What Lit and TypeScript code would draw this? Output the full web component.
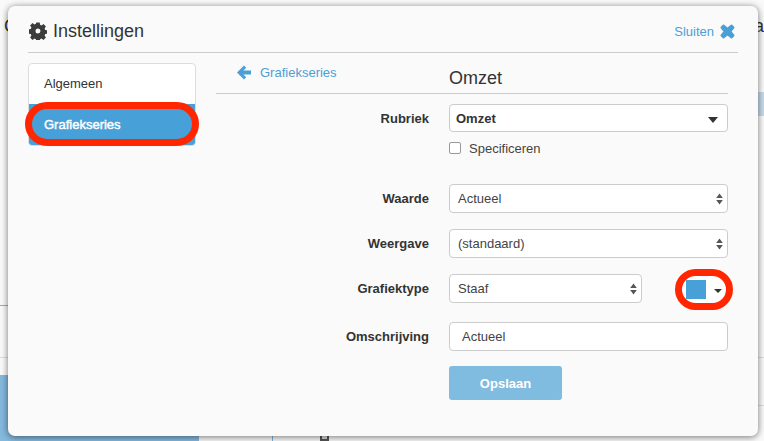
import { LitElement, html, css } from "lit";
import { customElement } from "lit/decorators.js";

const updown = html`<svg class="updown" width="7" height="12" viewBox="0 0 7 12"><path d="M3.5 .5 6.800 5H.2zM3.500 11.500 .2 7h6.600z" fill="#555"/></svg>`;

@customElement("app-root")
export class AppRoot extends LitElement {
  static styles = css`
    :host { display: block; width: 764px; height: 441px; position: relative; overflow: hidden; background: #fafafa; font-family: "Liberation Sans", Arial, sans-serif; color: #333; font-size: 13px; }
    .bg { position: absolute; }
    .bgtext { position: absolute; font-size: 18px; line-height: 20px; color: #333; }
    .l-blue { background: #7fb5dc; }
    .l-grey { background: #ddd; }
    .fill { background: #85b9de; }
    .band { background: #c5dbea; }
    .tiny { box-sizing: border-box; border: 2px solid #555; background: #ddd; }
    .modal { position: absolute; left: 8px; top: 6px; width: 750px; height: 430px; box-sizing: border-box; background: #fafafa; border-radius: 7px; box-shadow: 0 1px 7px rgba(0,0,0,.55); padding: 0 20px; }
    .head { height: 47px; box-sizing: border-box; border-bottom: 1px solid #ccc; display: flex; align-items: center; justify-content: space-between; padding: 4px 3px 0 1px; }
    .title { display: flex; align-items: center; gap: 6px; font-size: 18px; color: #333; }
    .close { display: flex; align-items: center; gap: 6px; color: #4a9fd6; font-size: 13px; }
    .body { display: flex; padding-top: 10px; }
    .side { width: 168px; height: 83px; flex: none; box-sizing: border-box; border: 1px solid #ddd; border-radius: 4px; background: #fff; position: relative; overflow: hidden; }
    .side .item { height: 38px; padding-left: 15px; display: flex; align-items: center; box-sizing: border-box; }
    .side .active { height: 42px; padding-bottom: 2px; background: #48a0d8; color: #fff; -webkit-text-stroke: .45px #fff; position: absolute; left: -1px; right: -1px; bottom: -1px; padding-left: 16px; }
    .main { margin-left: 20px; width: 512px; }
    .crumb { height: 31px; display: flex; box-sizing: border-box; border-bottom: 1px solid #ccc; }
    .back { width: 233px; display: flex; gap: 9px; color: #4a9fd6; font-size: 13px; padding-left: 21px; box-sizing: border-box; height: 19px; align-items: center; }
    .sub { font-size: 18px; line-height: 21px; padding-top: 5px; color: #333; }
    .form { display: grid; grid-template-columns: 213px 279px; column-gap: 20px; padding-top: 10px; }
    .lab { font-weight: 700; text-align: right; color: #333; font-size: 13px; align-self: center; }
    .ctl { box-sizing: border-box; height: 29px; border: 1px solid #ccc; border-radius: 4px; background: #fff; display: flex; align-items: center; justify-content: space-between; padding: 0 4px 0 8px; font-size: 13px; color: #444; }
    .ctl.strong { height: 28px; font-weight: 700; color: #333; padding: 0 9px 0 6px; }
    .ctl.input { padding-left: 12px; }
    .caret { width: 0; height: 0; margin-top: 3px; border-left: 5px solid transparent; border-right: 5px solid transparent; border-top: 6px solid #333; }
    .check { display: flex; align-items: center; gap: 8px; padding-top: 6px; height: 26px; box-sizing: border-box; grid-column: 2; color: #444; }
    .box { width: 10px; height: 10px; border: 1px solid #999; border-radius: 2px; background: #fff; }
    .row2 { display: flex; justify-content: space-between; align-items: flex-start; }
    .ctl.short { width: 193px; }
    .picker { position: relative; width: 42px; display: flex; align-items: center; gap: 8px; margin-top: 6px; }
    .swatch { position: relative; width: 20px; height: 19px; background: #48a0d8; }
    .ring { position: absolute; left: -11px; top: -11px; width: 58px; height: 41px; box-sizing: border-box; border: 7px solid #ff2600; border-radius: 21px; background: #fff; }
    .ring2 { position: absolute; left: 17px; top: 96px; width: 174px; height: 44px; box-sizing: border-box; border: 7px solid #ff2600; border-radius: 22px; }
    .mini { position: relative; width: 0; height: 0; margin-top: 2px; border-left: 4px solid transparent; border-right: 4px solid transparent; border-top: 4px solid #333; }
    .btn { width: 113px; height: 34px; border-radius: 3px; background: #7fbce0; color: #fff; font-weight: 700; display: flex; align-items: center; justify-content: center; font-size: 13px; }
    .wide { grid-column: 1 / 3; }
    .s26 { height: 26px; }
    .s16 { height: 16px; }
    .s19 { height: 19px; }
    .s15 { height: 15px; }
    .p1 { left: 0; top: 305px; width: 8px; height: 1px; }
    .p2 { left: 0; top: 357px; width: 8px; height: 1px; }
    .p3 { left: 0; top: 375px; width: 199px; height: 66px; }
    .p4 { left: 272px; top: 430px; width: 1px; height: 11px; }
    .p5 { left: 758px; top: 92px; width: 6px; height: 24px; }
    .p6 { left: 758px; top: 357px; width: 6px; height: 1px; }
    .p7 { left: 758px; top: 405px; width: 6px; height: 1px; }
    .p8 { left: 320px; top: 434px; width: 9px; height: 7px; }
    .c { left: 4px; top: 16px; }
    .a { left: 754px; top: 16px; }
  `;
  render() {
    return html`
      <div class="bg l-blue p1"></div>
      <div class="bg l-grey p2"></div>
      <div class="bg fill p3"></div>
      <div class="bg l-blue p4"></div>
      <div class="bg band p5"></div>
      <div class="bg l-grey p6"></div>
      <div class="bg l-grey p7"></div>
      <div class="bg tiny p8"></div>
      <div class="bgtext c">C</div>
      <div class="bgtext a">a</div>
      <div class="modal">
        <div class="head">
          <div class="title">
            <svg width="18" height="18" viewBox="0 0 18 18"><path fill="#3c3c3c" fill-rule="evenodd" d="M7.300.5h3.400l.4 2.300 1.500.6 1.900-1.300 2.400 2.400-1.300 1.900.6 1.500 2.300.4v3.400l-2.300.4-.6 1.500 1.300 1.900-2.400 2.400-1.900-1.300-1.500.6-.4 2.300H7.300l-.4-2.300-1.500-.6-1.900 1.300-2.400-2.400 1.300-1.900-.6-1.500-2.300-.4V7.300l2.300-.4.6-1.500-1.300-1.900 2.400-2.400 1.900 1.300 1.500-.6zM9 6.500a2.500 2.500 0 1 0 0 5 2.500 2.500 0 0 0 0-5z"/></svg>
            Instellingen
          </div>
          <div class="close">Sluiten
            <svg width="15" height="15" viewBox="0 0 15 15"><path d="M3.500 1.500 7.500 4.800 11.500 1.500 13.500 3.500 10.200 7.500 13.500 11.500 11.500 13.500 7.500 10.200 3.500 13.500 1.500 11.500 4.800 7.500 1.500 3.500z" fill="#4a9fd6" stroke="#4a9fd6" stroke-width="2" stroke-linejoin="round"/></svg>
          </div>
        </div>
        <div class="body">
          <div class="side">
            <div class="item">Algemeen</div>
            <div class="item active">Grafiekseries</div>
          </div>
          <div class="main">
            <div class="crumb">
              <div class="back">
                <svg width="14" height="15" viewBox="0 0 14 15"><path d="M7 .5 0 7.500l7 7 2.200-2.200L6.400 9.600H14V5.400H6.400l2.800-2.700z" fill="#4a9fd6"/></svg>
                Grafiekseries
              </div>
              <div class="sub">Omzet</div>
            </div>
            <div class="form">
              <div class="lab">Rubriek</div>
              <div class="ctl strong"><span>Omzet</span><span class="caret"></span></div>
              <div class="check"><span class="box"></span>Specificeren</div>
              <div class="wide s26"></div>
              <div class="lab">Waarde</div>
              <div class="ctl"><span>Actueel</span>${updown}</div>
              <div class="wide s16"></div>
              <div class="lab">Weergave</div>
              <div class="ctl"><span>(standaard)</span>${updown}</div>
              <div class="wide s16"></div>
              <div class="lab">Grafiektype</div>
              <div class="row2">
                <div class="ctl short"><span>Staaf</span>${updown}</div>
                <div class="picker"><span class="ring"></span><span class="swatch"></span><span class="mini"></span></div>
              </div>
              <div class="wide s19"></div>
              <div class="lab">Omschrijving</div>
              <div class="ctl input"><span>Actueel</span></div>
              <div class="wide s15"></div>
              <div></div>
              <div class="btn">Opslaan</div>
            </div>
          </div>
        </div>
        <div class="ring2"></div>
      </div>
    `;
  }
}
